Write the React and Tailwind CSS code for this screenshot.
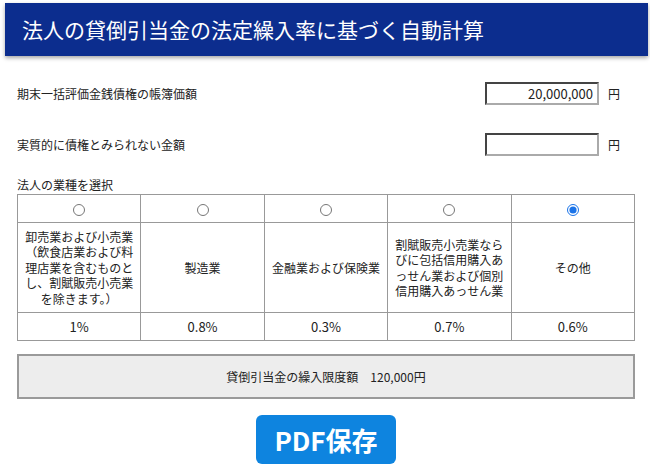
const industries = [
  { name: '卸売業および小売業（飲食店業および料理店業を含むものとし、割賦販売小売業を除きます。）', rate: '1%' },
  { name: '製造業', rate: '0.8%' },
  { name: '金融業および保険業', rate: '0.3%' },
  { name: '割賦販売小売業ならびに包括信用購入あっせん業および個別信用購入あっせん業', rate: '0.7%' },
  { name: 'その他', rate: '0.6%', checked: true },
]

function AmountRow({ label, value, className }) {
  return (
    <div className={`flex h-[23px] items-center ${className}`}>
      <div className="flex-1 text-[12px] leading-[16px]">{label}</div>
      <input
        type="text"
        defaultValue={value}
        className="h-full w-[114px] border-2 border-t-[#444] border-l-[#444] border-r-[#aaa] border-b-[#aaa] bg-white pr-[4px] text-right text-[13px] text-[#222] outline-none"
      />
      <span className="w-[36px] pl-[9px] text-[12px]">円</span>
    </div>
  )
}

export default function App() {
  return (
    <div className="min-h-screen bg-white pt-[3px] text-[#222] font-['Noto_Sans_CJK_JP','Noto_Sans',sans-serif]">
      {/* Header */}
      <header className="ml-[5px] mr-[2px] flex h-[53px] items-center bg-[#0c2d8e] pl-[17px] shadow-[0_2px_4px_rgba(0,0,0,0.35)]">
        <h1 className="text-[21px] leading-none text-white">法人の貸倒引当金の法定繰入率に基づく自動計算</h1>
      </header>

      <div className="pl-[17px] pr-[15px]">
        <AmountRow label="期末一括評価金銭債権の帳簿価額" value="20,000,000" className="mt-[26px]" />
        <AmountRow label="実質的に債権とみられない金額" value="" className="mt-[28px]" />

        <p className="mt-[21px] text-[12px] leading-[16px]">法人の業種を選択</p>

        {/* Industry table */}
        <table className="mt-[1px] w-full table-fixed border-collapse text-center text-[12px]">
          <tbody>
            <tr>
              {industries.map((it) => (
                <td key={it.name} className="h-[28px] border border-[#999] align-middle">
                  <input type="radio" name="industry" defaultChecked={it.checked} className="m-0 h-[12px] w-[12px] align-middle accent-[#1a73e8]" />
                </td>
              ))}
            </tr>
            <tr>
              {industries.map((it) => (
                <td key={it.name} className="h-[90px] border border-[#999] px-[5px] leading-[15.5px] align-middle">
                  {it.name}
                </td>
              ))}
            </tr>
            <tr>
              {industries.map((it) => (
                <td key={it.name} className="h-[28px] border border-[#999] text-[13px] align-middle">
                  {it.rate}
                </td>
              ))}
            </tr>
          </tbody>
        </table>

        {/* Result */}
        <div className="mt-[13px] flex h-[45px] items-center justify-center border-2 border-[#9a9a9a] bg-[#ededed] text-[12px]">
          貸倒引当金の繰入限度額　120,000円
        </div>

        <div className="mt-[16px] flex justify-center">
          <button className="h-[49px] w-[140px] rounded-[6px] bg-[#0e84df] text-[26px] font-bold leading-none text-white">PDF保存</button>
        </div>
      </div>
    </div>
  )
}
